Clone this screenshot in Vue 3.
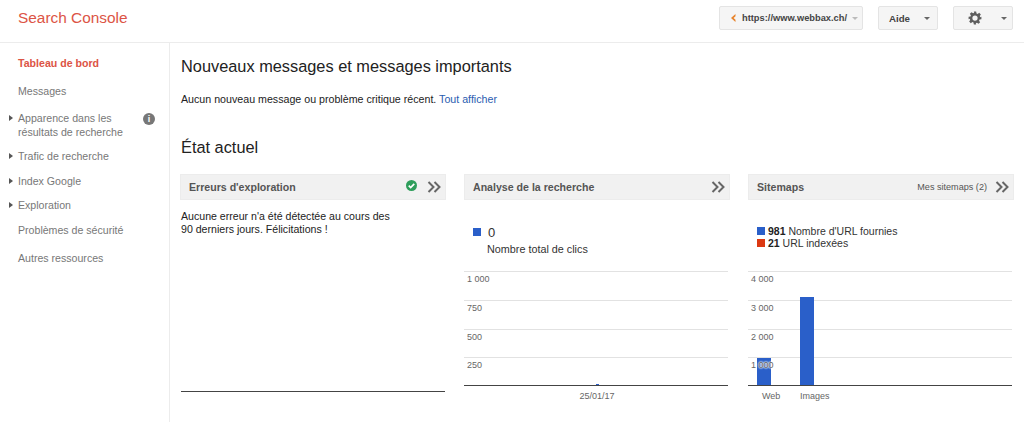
<template>
  <div class="page">
    <header class="topbar">
      <div class="logo">Search Console</div>
      <div class="top-actions">
        <button class="btn site-btn">
          <svg class="site-icon" width="6" height="8" viewBox="0 0 6 8">
            <path fill="#e8842c" d="M5.500 0L1 4l4.500 4V5.800L3.600 4l1.900-1.800z"/>
          </svg>
          <span>https://www.webbax.ch/</span>
          <span class="caret light"></span>
        </button>
        <button class="btn help-btn">
          <span>Aide</span>
          <span class="caret"></span>
        </button>
        <button class="btn gear-btn">
          <svg width="14" height="14" viewBox="0 0 24 24">
            <path fill="#5f5f5f" fill-rule="evenodd" d="M10 1h4l.6 3.200 1.900.8 2.700-1.800 2.800 2.800-1.800 2.700.8 1.900L23 10v4l-3.200.6-.8 1.900 1.800 2.700-2.800 2.800-2.700-1.800-1.900.8L14 23h-4l-.6-3.200-1.900-.8-2.700 1.800-2.800-2.800 1.800-2.700-.8-1.900L1 14v-4l3.200-.6.8-1.900-1.800-2.700 2.800-2.800 2.700 1.800 1.900-.8zM12 7.500a4.500 4.500 0 1 0 0 9 4.500 4.500 0 0 0 0-9z"/>
          </svg>
          <span class="caret"></span>
        </button>
      </div>
    </header>

    <div class="body">
      <nav class="sidebar">
        <div
          v-for="item in navItems"
          :key="item.label"
          class="nav-item"
          :class="{ active: item.active }"
          :style="{ marginBottom: item.gap + 'px' }"
        >
          <span v-if="item.arrow" class="nav-arrow"></span>
          <span class="nav-label">{{ item.label }}</span>
          <span v-if="item.info" class="info-icon">i</span>
        </div>
      </nav>

      <main class="content">
        <h2 class="title">Nouveaux messages et messages importants</h2>
        <p class="notice">
          Aucun nouveau message ou problème critique récent.
          <a class="link">Tout afficher</a>
        </p>
        <h2 class="title status">État actuel</h2>

        <div class="cards">
          <section class="card">
            <div class="card-head">
              <span class="card-title">Erreurs d'exploration</span>
              <svg class="check" width="11" height="11" viewBox="0 0 12 12">
                <circle cx="6" cy="6" r="6" fill="#2e9e5b"/>
                <path d="M3 6.200l2.100 2.100L9 4.200" fill="none" stroke="#fff" stroke-width="1.800"/>
              </svg>
              <svg class="chevrons" width="14" height="12" viewBox="0 0 14 12">
                <path d="M1.500 1l5 5-5 5M7.500 1l5 5-5 5" fill="none" stroke="#666" stroke-width="2"/>
              </svg>
            </div>
            <p class="errors-text">Aucune erreur n'a été détectée au cours des<br>90 derniers jours. Félicitations !</p>
            <div class="errors-line"></div>
          </section>

          <section class="card">
            <div class="card-head">
              <span class="card-title">Analyse de la recherche</span>
              <svg class="chevrons" width="14" height="12" viewBox="0 0 14 12">
                <path d="M1.500 1l5 5-5 5M7.500 1l5 5-5 5" fill="none" stroke="#666" stroke-width="2"/>
              </svg>
            </div>
            <div class="clicks">
              <div class="clicks-top"><span class="square blue"></span><span class="clicks-value">0</span></div>
              <div class="clicks-label">Nombre total de clics</div>
            </div>
            <div class="chart">
              <div v-for="label in clickTicks" :key="label" class="grid-row"><span>{{ label }}</span></div>
              <div class="dot"></div>
            </div>
            <div class="x-labels centered"><span>25/01/17</span></div>
          </section>

          <section class="card">
            <div class="card-head">
              <span class="card-title">Sitemaps</span>
              <span class="head-link">Mes sitemaps (2)</span>
              <svg class="chevrons" width="14" height="12" viewBox="0 0 14 12">
                <path d="M1.500 1l5 5-5 5M7.500 1l5 5-5 5" fill="none" stroke="#666" stroke-width="2"/>
              </svg>
            </div>
            <div class="legend">
              <div><span class="square blue"></span><b>981</b> Nombre d'URL fournies</div>
              <div><span class="square red"></span><b>21</b> URL indexées</div>
            </div>
            <div class="chart">
              <div v-for="label in sitemapTicks" :key="label" class="grid-row"><span>{{ label }}</span></div>
              <div
                v-for="bar in bars"
                :key="bar.left"
                class="bar"
                :style="{ left: bar.left + 'px', height: bar.height + 'px' }"
              ></div>
            </div>
            <div class="x-labels">
              <span class="web-label">Web</span>
              <span class="images-label">Images</span>
            </div>
          </section>
        </div>
      </main>
    </div>
  </div>
</template>

<script setup>
const navItems = [
  { label: 'Tableau de bord', active: true, gap: 11 },
  { label: 'Messages', gap: 10 },
  { label: 'Apparence dans les résultats de recherche', arrow: true, info: true, gap: 7 },
  { label: 'Trafic de recherche', arrow: true, gap: 8 },
  { label: 'Index Google', arrow: true, gap: 7 },
  { label: 'Exploration', arrow: true, gap: 8 },
  { label: 'Problèmes de sécurité', gap: 11 },
  { label: 'Autres ressources', gap: 0 }
]

const clickTicks = ['1 000', '750', '500', '250']
const sitemapTicks = ['4 000', '3 000', '2 000', '1 000']

const bars = [
  { left: 9, height: 27 },
  { left: 52, height: 88 }
]
</script>

<style>
html,
body {
  margin: 0;
  background: #fff;
}
</style>

<style scoped>
.page {
  width: 1024px;
  height: 422px;
  overflow: hidden;
  font-family: "Liberation Sans", Arial, sans-serif;
  color: #333;
  background: #fff;
}

.topbar {
  display: flex;
  align-items: center;
  justify-content: space-between;
  height: 43px;
  box-sizing: border-box;
  padding: 0 11px 6px 18px;
  border-bottom: 1px solid #ececec;
}

.logo {
  font-size: 15.400px;
  color: #dc5445;
}

.top-actions {
  display: flex;
  gap: 15px;
}

.btn {
  display: flex;
  align-items: center;
  justify-content: space-between;
  height: 24px;
  box-sizing: border-box;
  padding: 0 7px 0 10px;
  border: 1px solid #e4e4e4;
  border-radius: 2px;
  background: #f5f5f5;
  font-family: inherit;
  font-size: 9.700px;
  font-weight: bold;
  color: #444;
}

.site-btn {
  width: 144px;
  justify-content: flex-start;
  font-size: 9.300px;
}

.help-btn {
  width: 60px;
}

.gear-btn {
  width: 60px;
  padding-left: 14px;
  padding-right: 5px;
}

.site-icon {
  flex: none;
  margin-right: 6px;
}

.caret {
  width: 0;
  height: 0;
  border-left: 3px solid transparent;
  border-right: 3px solid transparent;
  border-top: 3px solid #666;
}

.caret.light {
  margin-left: 5px;
  border-top-color: #bbb;
}

.body {
  display: flex;
  height: 379px;
}

.sidebar {
  width: 170px;
  flex: none;
  box-sizing: border-box;
  padding-top: 12px;
  border-right: 1px solid #ececec;
}

.nav-item {
  position: relative;
  padding: 1px 30px 2px 18px;
  font-size: 10.600px;
  line-height: 14px;
  color: #777;
}

.nav-item.active {
  font-weight: bold;
  color: #dc5445;
}

.nav-arrow {
  position: absolute;
  left: 9px;
  top: 5px;
  width: 0;
  height: 0;
  border-top: 3px solid transparent;
  border-bottom: 3px solid transparent;
  border-left: 4px solid #555;
}

.info-icon {
  position: absolute;
  left: 143px;
  top: 3px;
  width: 12px;
  height: 12px;
  border-radius: 50%;
  background: #777;
  color: #fff;
  font-size: 9px;
  font-weight: bold;
  line-height: 12px;
  text-align: center;
}

.content {
  flex: 1;
  min-width: 0;
  padding: 13px 10px 0 11px;
}

.title {
  margin: 0;
  font-size: 16.350px;
  font-weight: normal;
  line-height: 20px;
  color: #222;
}

.notice {
  margin: 16px 0 0;
  font-size: 10.670px;
  line-height: 14px;
  color: #222;
}

.link {
  color: #2a5db0;
}

.status {
  margin-top: 31px;
}

.cards {
  display: grid;
  grid-template-columns: repeat(3, 266px);
  column-gap: 18px;
  margin: 17px 0 0 -1px;
}

.card {
  min-width: 0;
}

.card-head {
  display: flex;
  align-items: center;
  height: 26px;
  padding: 0 4px 0 8px;
  background: #f1f1f1;
  border: 1px solid #ececec;
  box-sizing: border-box;
}

.card-title {
  flex: 1;
  font-size: 10.600px;
  font-weight: bold;
  color: #555;
}

.check {
  margin: -4px 10px 0 0;
}

.head-link {
  margin-right: 8px;
  font-size: 9.100px;
  color: #555;
}

.errors-text {
  margin: 10px 0 0 1px;
  font-size: 10.600px;
  line-height: 13px;
  color: #222;
}

.errors-line {
  width: 264px;
  height: 1px;
  margin: 155px 0 0 1px;
  background: #444;
}

.clicks {
  height: 71px;
  box-sizing: border-box;
  padding: 25px 0 0 9px;
}

.clicks-top {
  display: flex;
  align-items: center;
  height: 14px;
  font-size: 13px;
  color: #333;
}

.clicks-value {
  margin-left: 4px;
}

.clicks-label {
  margin: 3px 0 0 14px;
  font-size: 10.800px;
  line-height: 14px;
  color: #333;
}

.legend {
  height: 71px;
  box-sizing: border-box;
  padding: 25px 0 0 9px;
  font-size: 10.500px;
  line-height: 12px;
  color: #333;
}

.legend b {
  color: #222;
}

.square {
  display: inline-block;
  width: 8px;
  height: 8px;
  margin-right: 3px;
}

.blue {
  background: #2a5fc9;
}

.red {
  background: #dc3912;
}

.chart {
  position: relative;
  margin-right: 2px;
  border-bottom: 1px solid #444;
}

.grid-row {
  height: 28px;
  box-sizing: border-box;
  padding: 2px 0 0 3px;
  border-top: 1px solid #e2e2e2;
  font-size: 9px;
  line-height: 10px;
  color: #666;
}

.grid-row:nth-child(1),
.grid-row:nth-child(2) {
  height: 29px;
}

.grid-row span {
  position: relative;
  z-index: 1;
  text-shadow: 0 0 2px #fff, 0 0 2px #fff, 0 0 2px #fff;
}

.bar {
  position: absolute;
  bottom: 0;
  width: 14px;
  background: #2a5fc9;
}

.dot {
  position: absolute;
  left: 132px;
  bottom: 0;
  width: 3px;
  height: 1px;
  background: #2a5fc9;
}

.x-labels {
  position: relative;
  height: 14px;
  padding-top: 5px;
  font-size: 9px;
  line-height: 10px;
  color: #666;
}

.x-labels.centered {
  text-align: center;
}

.web-label {
  position: absolute;
  left: 14px;
}

.images-label {
  position: absolute;
  left: 52px;
}
</style>
